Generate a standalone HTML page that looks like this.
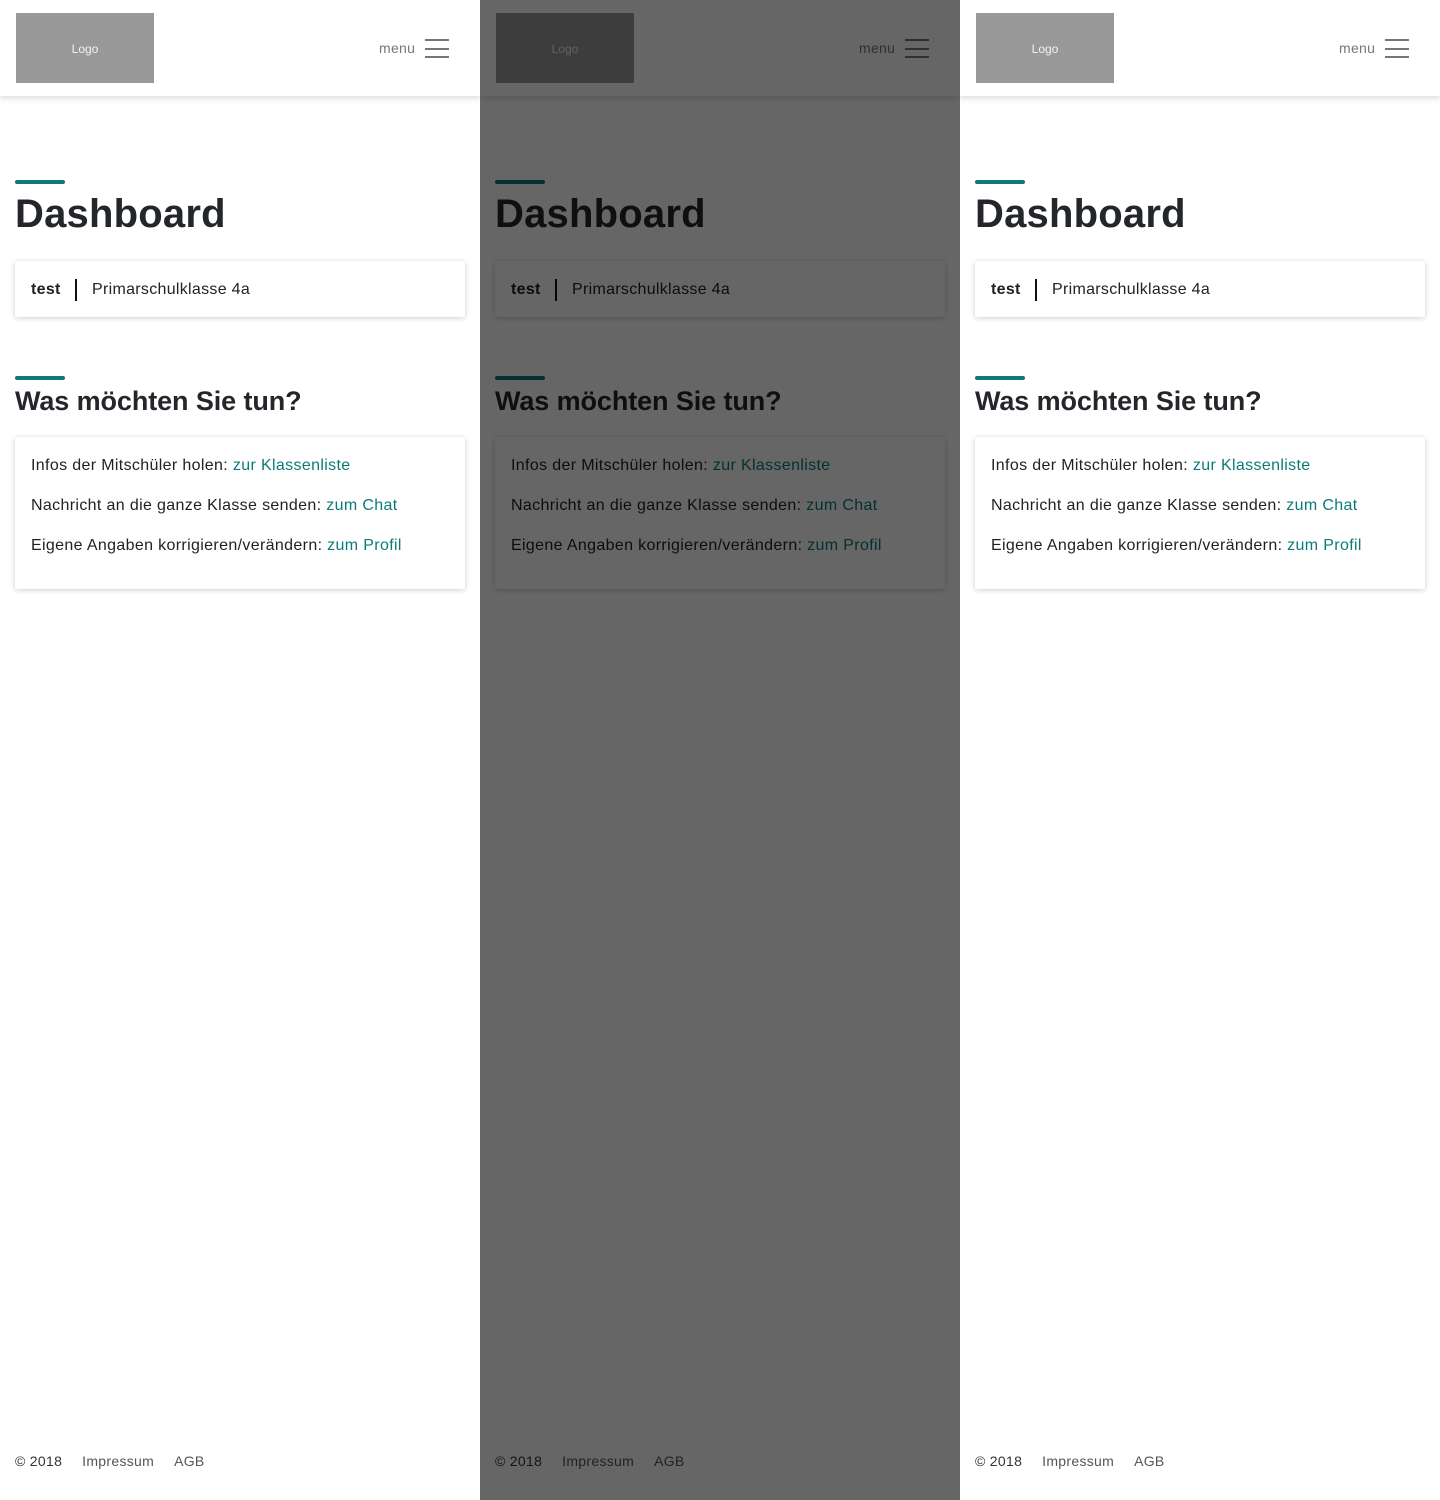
<!DOCTYPE html>
<html><head><meta charset="utf-8"><style>
*{margin:0;padding:0;box-sizing:border-box}
body{width:1440px;height:1500px;overflow:hidden;font-family:"Liberation Sans",sans-serif;background:#fff;display:flex}
.p{position:relative;width:480px;height:1500px;background:#fff;overflow:hidden}
.hdr{position:absolute;left:0;top:0;width:480px;height:96px;background:#fff;box-shadow:0 2px 6px rgba(0,0,0,.15)}
.logo{position:absolute;left:16px;top:13px;width:138px;height:70px;background:#999;color:#f2f2f2;font-size:12px;text-align:center;line-height:72px}
.menu{position:absolute;left:379px;top:40px;font-size:14px;color:#777;letter-spacing:.3px}
.hb{position:absolute;left:425px;top:39px;width:24px}
.hb i{display:block;height:2px;background:#777;margin-bottom:6.5px}
.bar{position:absolute;left:15px;width:50px;height:4px;border-radius:2px;background:#0a7b78}
h1{position:absolute;left:15px;top:192px;font-size:40px;font-weight:bold;color:#23262a;letter-spacing:.2px}
h2{position:absolute;left:15px;top:386px;font-size:27px;font-weight:bold;color:#23262a;letter-spacing:-.1px}
.card{position:absolute;left:15px;width:450px;background:#fff;box-shadow:0 1px 5px rgba(0,0,0,.2)}
.c1{top:261px;height:56px;font-size:16px;color:#222;letter-spacing:.3px}
.c1 b{position:absolute;left:16px;top:20px}
.c1 .sep{position:absolute;left:60px;top:18px;width:2px;height:22px;background:#111}
.c1 span{position:absolute;left:77px;top:20px}
.c2{top:437px;height:152px;font-size:16px;color:#222;padding:20px 16px;letter-spacing:.35px}
.c2 p{height:40px}
.c2 a{color:#0a7b78;text-decoration:none}
.ft{position:absolute;left:15px;top:1453px;font-size:14px;color:#333;letter-spacing:.3px}
.ft span{margin-right:20px}
.ft span+span{color:#555}
.ov{position:absolute;inset:0;background:rgba(0,0,0,.6)}
</style></head><body>
<div class="p">
<div class="bar" style="top:180px"></div><h1>Dashboard</h1>
<div class="card c1"><b>test</b><div class="sep"></div><span>Primarschulklasse 4a</span></div>
<div class="bar" style="top:376px"></div><h2>Was möchten Sie tun?</h2>
<div class="card c2"><p>Infos der Mitschüler holen: <a>zur Klassenliste</a></p><p>Nachricht an die ganze Klasse senden: <a>zum Chat</a></p><p>Eigene Angaben korrigieren/verändern: <a>zum Profil</a></p></div>
<div class="ft"><span>© 2018</span><span>Impressum</span><span>AGB</span></div>
<div class="hdr"><div class="logo">Logo</div><div class="menu">menu</div><div class="hb"><i></i><i></i><i></i></div></div>
</div>
<div class="p">
<div class="bar" style="top:180px"></div><h1>Dashboard</h1>
<div class="card c1"><b>test</b><div class="sep"></div><span>Primarschulklasse 4a</span></div>
<div class="bar" style="top:376px"></div><h2>Was möchten Sie tun?</h2>
<div class="card c2"><p>Infos der Mitschüler holen: <a>zur Klassenliste</a></p><p>Nachricht an die ganze Klasse senden: <a>zum Chat</a></p><p>Eigene Angaben korrigieren/verändern: <a>zum Profil</a></p></div>
<div class="ft"><span>© 2018</span><span>Impressum</span><span>AGB</span></div>
<div class="hdr"><div class="logo">Logo</div><div class="menu">menu</div><div class="hb"><i></i><i></i><i></i></div></div>
<div class="ov"></div>
</div>
<div class="p">
<div class="bar" style="top:180px"></div><h1>Dashboard</h1>
<div class="card c1"><b>test</b><div class="sep"></div><span>Primarschulklasse 4a</span></div>
<div class="bar" style="top:376px"></div><h2>Was möchten Sie tun?</h2>
<div class="card c2"><p>Infos der Mitschüler holen: <a>zur Klassenliste</a></p><p>Nachricht an die ganze Klasse senden: <a>zum Chat</a></p><p>Eigene Angaben korrigieren/verändern: <a>zum Profil</a></p></div>
<div class="ft"><span>© 2018</span><span>Impressum</span><span>AGB</span></div>
<div class="hdr"><div class="logo">Logo</div><div class="menu">menu</div><div class="hb"><i></i><i></i><i></i></div></div>
</div>
</body></html>
